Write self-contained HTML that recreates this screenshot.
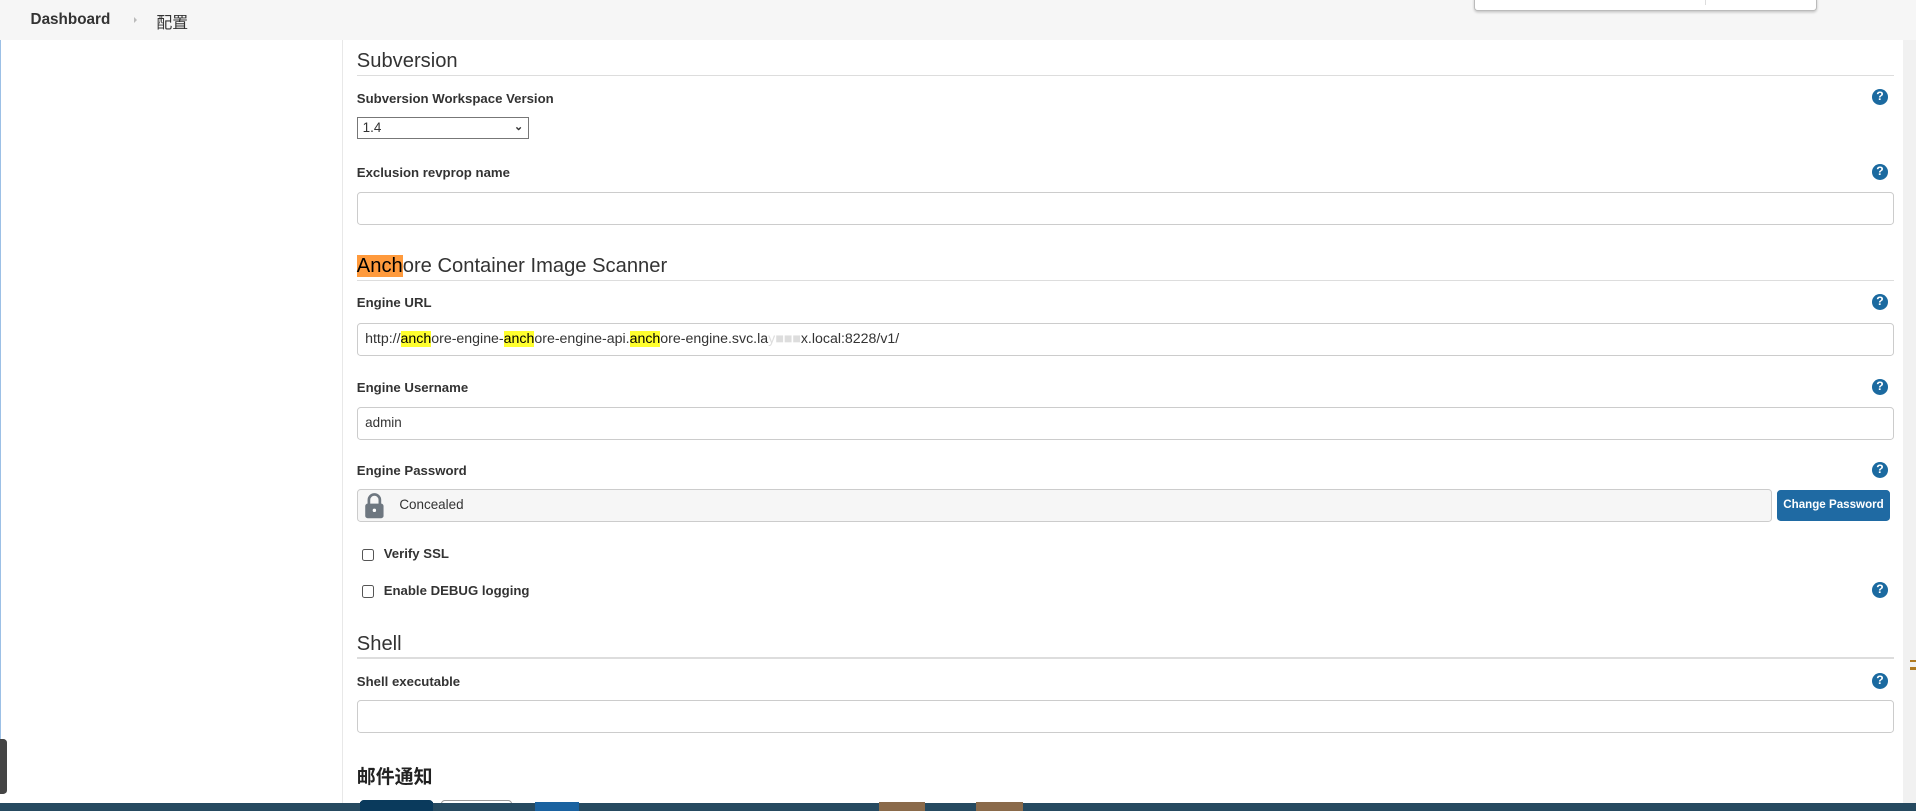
<!DOCTYPE html>
<html><head><meta charset="utf-8"><style>
*{margin:0;padding:0;box-sizing:border-box}
html,body{width:1916px;height:811px;overflow:hidden;background:#fff}
#w{position:relative;width:1568px;height:664px;zoom:1.22194;font-family:"Liberation Sans","Noto Sans CJK SC",sans-serif;color:#333}
.a{position:absolute}
.lbl{position:absolute;left:292px;font-size:10.8px;font-weight:bold;color:#333;line-height:14px}
.h{position:absolute;left:292px;font-size:16.5px;color:#333;line-height:20px}
.hr{position:absolute;left:292px;width:1258px;height:1px;background:#ddd}
.inp{position:absolute;left:292px;width:1258px;height:27px;border:1px solid #ccc;border-radius:3px;background:#fff;font-size:11px;line-height:25px;padding-left:6px;color:#333}
.q{position:absolute;left:1532px;width:13px;height:13px;border-radius:50%;background:#1b6aa0;color:#fff;font-size:10px;font-weight:bold;text-align:center;line-height:13px}
.cb{position:absolute;left:296px;width:10px;height:10px;border:1px solid #555;border-radius:2px;background:#fff}
mark{background:#ffff2e;color:#000}
</style></head><body><div id="w">
<div class="a" style="left:0;top:0;width:1568px;height:33px;background:#f6f6f6"></div>
<div class="a" style="left:25px;top:9px;font-size:12.5px;font-weight:bold;color:#333">Dashboard</div>
<div class="a" style="left:110px;top:14px;width:0;height:0;border-left:3px solid #bbb;border-top:3px solid transparent;border-bottom:3px solid transparent"></div>
<div class="a" style="left:128px;top:8px;font-size:13px;color:#333">配置</div>
<div class="a" style="left:1206px;top:-2px;width:281px;height:11px;background:#fff;border:1px solid #bbb;border-radius:0 0 3px 3px;box-shadow:0 1px 2px rgba(0,0,0,.2)"></div>
<div class="a" style="left:1395px;top:0;width:1px;height:4px;background:#ddd"></div>
<div class="a" style="left:1557px;top:33px;width:11px;height:631px;background:#f1f1f1"></div>
<div class="a" style="left:1563px;top:540px;width:5px;height:2px;background:#b07a20"></div>
<div class="a" style="left:1563px;top:546px;width:5px;height:2px;background:#b07a20"></div>
<div class="a" style="left:280px;top:33px;width:1px;height:631px;background:#e8e8e8"></div>
<div class="a" style="left:0;top:33px;width:1px;height:580px;background:#9cc0e6"></div>
<div class="a" style="left:0;top:605px;width:6px;height:45px;background:#444;border-radius:0 3px 3px 0"></div>

<div class="h" style="top:40px">Subversion</div>
<div class="hr" style="top:61px"></div>
<div class="lbl" style="top:74px">Subversion Workspace Version</div>
<div class="q" style="top:73px">?</div>
<div class="a" style="left:292px;top:96px;width:141px;height:18px;border:1px solid #777;font-size:11px;line-height:16px;padding-left:4px">1.4<span style="position:absolute;right:4px;top:0;font-size:9px;font-weight:bold">&#8964;</span></div>
<div class="lbl" style="top:134px">Exclusion revprop name</div>
<div class="q" style="top:134px">?</div>
<div class="inp" style="top:157px"></div>

<div class="h" style="top:208px"><span style="background:#ff9a3c;color:#000">Anch</span>ore Container Image Scanner</div>
<div class="hr" style="top:229px"></div>
<div class="lbl" style="top:241px">Engine URL</div>
<div class="q" style="top:241px">?</div>
<div class="inp" style="top:264px;font-size:11.6px">http://<mark>anch</mark>ore-engine-<mark>anch</mark>ore-engine-api.<mark>anch</mark>ore-engine.svc.la<span style="color:#ddd">y■■■</span>x.local:8228/v1/</div>
<div class="lbl" style="top:310px">Engine Username</div>
<div class="q" style="top:310px">?</div>
<div class="inp" style="top:333px">admin</div>
<div class="lbl" style="top:378px">Engine Password</div>
<div class="q" style="top:378px">?</div>
<div class="inp" style="top:400px;width:1158px;background:#f6f6f6;padding-left:34px">Concealed</div>
<svg class="a" style="left:298px;top:403px" width="17" height="22" viewBox="0 0 17 22"><path d="M4 10V6.5a4.5 4.5 0 0 1 9 0V10" fill="none" stroke="#6e7780" stroke-width="2.2"/><rect x="1" y="9.5" width="15" height="12" rx="2" fill="#6e7780"/><circle cx="8.5" cy="15" r="1.4" fill="#fff"/></svg>
<div class="a" style="left:1454px;top:401px;width:93px;height:25px;background:#1f6aa3;border-radius:3px;color:#fff;font-size:9.5px;font-weight:bold;text-align:center;line-height:25px">Change Password</div>
<div class="cb" style="top:449px"></div>
<div class="a" style="left:314px;top:447px;font-size:10.8px;font-weight:bold">Verify SSL</div>
<div class="cb" style="top:479px"></div>
<div class="a" style="left:314px;top:477px;font-size:10.8px;font-weight:bold">Enable DEBUG logging</div>
<div class="q" style="top:476px">?</div>

<div class="h" style="top:517px">Shell</div>
<div class="hr" style="top:538px"></div>
<div class="lbl" style="top:551px">Shell executable</div>
<div class="q" style="top:551px">?</div>
<div class="inp" style="top:573px"></div>
<div class="a" style="left:292px;top:624px;font-size:15.5px;font-weight:bold;color:#222">邮件通知</div>

<div class="a" style="left:295px;top:655px;width:59px;height:9px;background:#0a3a5c;border-radius:3px 3px 0 0"></div>
<div class="a" style="left:361px;top:655px;width:58px;height:9px;border:1px solid #999;border-radius:3px 3px 0 0"></div>
<div class="a" style="left:0;top:657px;width:1568px;height:7px;background:#264a60"></div>
<div class="a" style="left:295px;top:656px;width:59px;height:8px;background:#0a3a5c"></div>
<div class="a" style="left:438px;top:656px;width:36px;height:8px;background:#1a62a0"></div>
<div class="a" style="left:719px;top:656px;width:38px;height:8px;background:#8a6a4a"></div>
<div class="a" style="left:799px;top:656px;width:38px;height:8px;background:#8a6a4a"></div>
</div></body></html>
